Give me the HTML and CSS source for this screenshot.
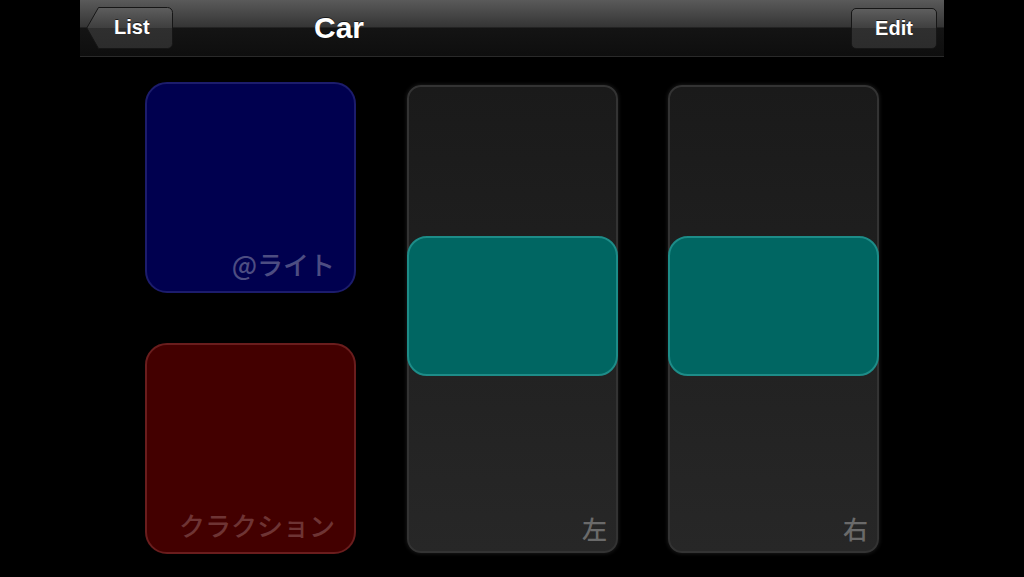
FILE: index.html
```html
<!DOCTYPE html>
<html lang="ja">
<head>
    <meta charset="UTF-8">
    <meta name="viewport" content="width=device-width, initial-scale=1.0">
    <title>Car</title>
    <link rel="stylesheet" href="styles.css">
</head>
<body>

<div class="screen">
    <div class="navbar">
        <a class="back-btn" href="#">
            <svg class="back-shape" width="88" height="43" viewBox="0 0 88 43">
                <defs>
                    <linearGradient id="btnGrad" x1="0" y1="0" x2="0" y2="1">
                        <stop offset="0" stop-color="#5e5e5e"/>
                        <stop offset="0.5" stop-color="#3e3e3e"/>
                        <stop offset="0.5" stop-color="#2f2f2f"/>
                        <stop offset="1" stop-color="#2c2c2c"/>
                    </linearGradient>
                </defs>
                <path d="M12.5 0.5 H81.5 a5 5 0 0 1 5 5 V36.5 a5 5 0 0 1 -5 5 H12.5 L0.8 21 Z"
                      fill="url(#btnGrad)" stroke="#161616" stroke-width="1"/>
            </svg>
            <span class="back-label">List</span>
        </a>
        <h1 class="title">Car</h1>
        <a class="edit-btn" href="#">Edit</a>
    </div>

    <div class="controls">
        <div class="buttons">
            <div class="pad pad-blue"><span class="pad-label">@ライト</span></div>
            <div class="pad pad-red"><span class="pad-label">クラクション</span></div>
        </div>

        <div class="slider">
            <div class="knob"></div>
            <span class="slider-label">左</span>
        </div>

        <div class="slider">
            <div class="knob"></div>
            <span class="slider-label">右</span>
        </div>
    </div>
</div>

</body>
</html>
```

FILE: styles.css
```css
body {
    margin: 0;
    background-color: #000000;
    font-family: "Liberation Sans", Arial, "Noto Sans CJK JP", sans-serif;
    color: #ffffff;
    height: 100vh;
    overflow: hidden;
}
.screen {
    width: 864px;
    margin: 0 auto;
}

/* barra de navegação */
.navbar {
    height: 56px;
    border-bottom: 1px solid #2a2a2a;
    background: linear-gradient(#5a5a5a 0, #353535 48%, #141414 50%, #0e0e0e 100%);
    display: flex;
    align-items: center;
    padding: 0 7px 0 6px;
}
.back-btn {
    position: relative;
    width: 88px;
    height: 43px;
    margin-top: 1px;
    text-decoration: none;
    color: #ffffff;
}
.back-shape {
    position: absolute;
    left: 0;
    top: 0;
}
.back-label {
    position: relative;
    display: block;
    padding-left: 28px;
    line-height: 40px;
    font-size: 20px;
    font-weight: bold;
    text-shadow: 0 -1px 0 rgba(0, 0, 0, 0.6);
}
.title {
    margin: 0 0 0 140px;
    font-size: 30px;
    font-weight: bold;
    text-shadow: 0 -1px 0 rgba(0, 0, 0, 0.6);
}
.edit-btn {
    margin-left: auto;
    width: 84px;
    height: 39px;
    line-height: 38px;
    margin-top: 1px;
    text-align: center;
    border: 1px solid #161616;
    border-radius: 5px;
    background: linear-gradient(#5e5e5e 0, #3e3e3e 50%, #2f2f2f 50%, #2c2c2c 100%);
    color: #ffffff;
    text-decoration: none;
    font-size: 20px;
    font-weight: bold;
    text-shadow: 0 -1px 0 rgba(0, 0, 0, 0.6);
}

/* controles */
.controls {
    display: flex;
    align-items: flex-start;
    gap: 50px;
    padding-left: 65px;
}
.buttons {
    display: flex;
    flex-direction: column;
    gap: 50px;
    padding-top: 25px;
    margin-right: 1px;
}
.pad {
    width: 211px;
    height: 211px;
    box-sizing: border-box;
    border-radius: 22px;
    border: 2px solid;
    display: flex;
    align-items: flex-end;
    justify-content: flex-end;
    padding: 0 19px 13px 0;
}
.pad-blue {
    background-color: #00004f;
    border-color: #1c1c6c;
    color: #4d4d82;
}
.pad-red {
    background-color: #430000;
    border-color: #6a1d1d;
    color: #6e3434;
}
.pad-label {
    font-family: "Noto Sans CJK JP", sans-serif;
    font-size: 26px;
    font-weight: 500;
    line-height: 28px;
}
.slider {
    position: relative;
    margin-top: 28px;
    width: 211px;
    height: 468px;
    box-sizing: border-box;
    border: 2px solid #333333;
    border-radius: 14px;
    background: linear-gradient(#1a1a1a, #272727);
    box-shadow: 0 0 4px rgba(70, 70, 70, 0.5);
    display: flex;
    align-items: flex-end;
    justify-content: flex-end;
    padding: 0 9px 9px 0;
}
.knob {
    position: absolute;
    left: -2px;
    right: -2px;
    top: 149px;
    height: 140px;
    box-sizing: border-box;
    border: 2px solid #1d8c88;
    border-radius: 20px;
    background-color: #006662;
}
.slider-label {
    font-family: "Noto Sans CJK JP", sans-serif;
    font-size: 25px;
    font-weight: 500;
    line-height: 27px;
    color: #6a6a6a;
}
```
